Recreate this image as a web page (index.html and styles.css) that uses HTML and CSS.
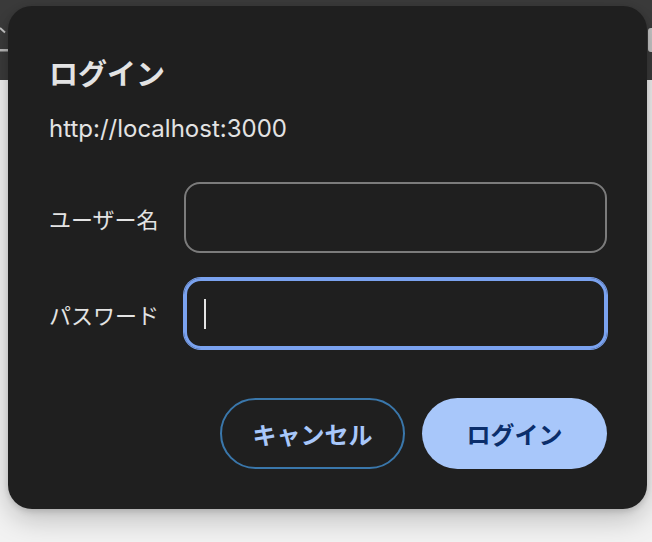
FILE: index.html
```html
<!DOCTYPE html>
<html lang="ja">
<head>
<meta charset="utf-8">
<title>ログイン</title>
<link rel="stylesheet" href="styles.css">
</head>
<body>
<div class="page">
  <div class="topbar">
    <svg class="frag-left" width="8" height="80" viewBox="0 0 8 80">
      <path d="M0 28 L5 32.5" stroke="#c4c4c4" stroke-width="2" fill="none"/>
      <rect x="0" y="49" width="8" height="2.5" fill="#b9b9b9"/>
    </svg>
    <div class="frag-right"></div>
  </div>
  <div class="content"></div>

  <div class="dialog" role="dialog">
    <h1 class="title">ログイン</h1>
    <p class="origin">http://localhost:3000</p>
    <div class="form">
      <label class="row">
        <span class="label">ユーザー名</span>
        <span class="input"></span>
      </label>
      <label class="row">
        <span class="label">パスワード</span>
        <span class="input focus"><span class="caret"></span></span>
      </label>
    </div>
    <div class="actions">
      <button class="btn btn-outline">キャンセル</button>
      <button class="btn btn-primary">ログイン</button>
    </div>
  </div>
</div>
</body>
</html>
```

FILE: styles.css
```css
* { box-sizing: border-box; }

html, body {
  margin: 0;
  padding: 0;
}

body {
  width: 652px;
  height: 542px;
  overflow: hidden;
  background: #f2f2f2;
  font-family: "Noto Sans CJK JP", "Noto Sans", sans-serif;
}

.page {
  position: relative;
  width: 652px;
  height: 542px;
  display: flex;
  flex-direction: column;
}

.topbar {
  height: 80px;
  background: #3b3b3b;
  display: flex;
  justify-content: space-between;
  align-items: flex-start;
}

.frag-left { display: block; }

.frag-right {
  margin-top: 28px;
  width: 4px;
  height: 24px;
  background: #c6c6c6;
  border-radius: 3px 0 0 3px;
}

.content {
  flex: 1;
  background: #f2f2f2;
}

.dialog {
  position: absolute;
  left: 8px;
  top: 6px;
  width: 639px;
  height: 503px;
  background: #1f1f1f;
  border-radius: 24px;
  box-shadow: 0 10px 28px rgba(0, 0, 0, 0.22), 0 2px 6px rgba(0, 0, 0, 0.15);
  padding: 48px 40px 0 41px;
  display: flex;
  flex-direction: column;
  color: #e3e3e3;
}

.title {
  margin: 0;
  font-size: 29px;
  line-height: 36px;
  font-weight: 700;
  color: #e3e3e3;
}

.origin {
  margin: 25px 0 0;
  font-family: "Inter", "Noto Sans", sans-serif;
  font-size: 24px;
  line-height: 28px;
  color: #e3e3e3;
}

.form {
  margin-top: 39px;
  display: flex;
  flex-direction: column;
  gap: 25px;
}

.row {
  display: flex;
  align-items: center;
}

.label {
  width: 135px;
  flex: none;
  font-size: 22px;
  line-height: 28px;
  color: #e3e3e3;
}

.input {
  flex: 1;
  height: 71px;
  border: 2px solid #7b7b7b;
  border-radius: 16px;
  display: flex;
  align-items: center;
  padding-left: 18px;
}

.input.focus {
  border: 3px solid #7aa2ef;
  box-shadow: 0 0 0 1px #7aa2ef;
  border-radius: 17px;
  padding-left: 17px;
}

.caret {
  width: 2px;
  height: 30px;
  background: #e3e3e3;
}

.actions {
  margin-top: 49px;
  display: flex;
  justify-content: flex-end;
  gap: 17px;
}

.btn {
  width: 185px;
  height: 71px;
  border-radius: 36px;
  font-family: "Noto Sans CJK JP", "Noto Sans", sans-serif;
  font-size: 24px;
  font-weight: 700;
  padding: 0;
  cursor: pointer;
}

.btn-outline {
  background: transparent;
  border: 2px solid #3a77ab;
  color: #a8c7fa;
}

.btn-primary {
  background: #a8c7fa;
  border: none;
  color: #0b2e6b;
}
```
